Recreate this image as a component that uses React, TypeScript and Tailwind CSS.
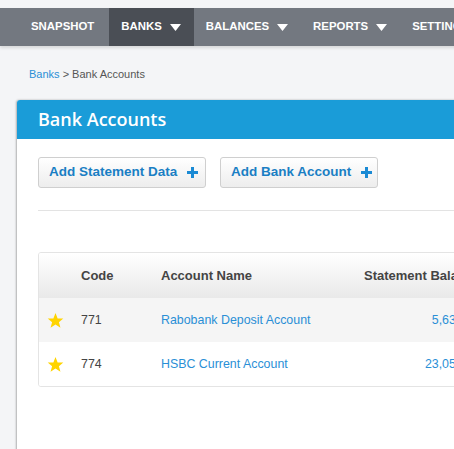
import React from "react";

const Tri = () => (
  <svg width="11" height="7" viewBox="0 0 11 7" className="ml-2">
    <polygon points="0,0 11,0 5.5,7" fill="#ffffff" />
  </svg>
);

const Star = () => (
  <svg width="17" height="17" viewBox="0 0 24 24">
    <polygon
      points="12,1.5 15,9 23,9.3 16.8,14.3 19,22.3 12,17.8 5,22.3 7.2,14.3 1,9.3 9,9"
      fill="#ffd400"
    />
  </svg>
);

const Plus = () => (
  <svg width="11" height="11" viewBox="0 0 11 11" className="ml-[10px]">
    <rect x="4" y="0" width="3" height="11" fill="#1a8ad4" />
    <rect x="0" y="4" width="11" height="3" fill="#1a8ad4" />
  </svg>
);

export default function App() {
  const navItems = [
    { label: "SNAPSHOT", tri: false, active: false },
    { label: "BANKS", tri: true, active: true },
    { label: "BALANCES", tri: true, active: false },
    { label: "REPORTS", tri: true, active: false },
    { label: "SETTINGS", tri: true, active: false },
  ];
  const rows = [
    { code: "771", name: "Rabobank Deposit Account", bal: "5,632.00", bg: "bg-[#f5f5f5]" },
    { code: "774", name: "HSBC Current Account", bal: "23,057.00", bg: "bg-white" },
  ];
  return (
    <div
      className="w-[454px] h-[449px] overflow-hidden bg-[#f4f5f7]"
      style={{ fontFamily: '"Liberation Sans", Arial, sans-serif' }}
    >
      <div className="pt-[8px]">
        <div className="flex h-[38px] bg-[#737880] pl-[19px] shadow-[0_2px_3px_rgba(0,0,0,0.12)] w-[700px]">
          {navItems.map((n) => (
            <div
              key={n.label}
              className={`flex items-center pl-3 text-[11.4px] font-bold text-white ${
                n.active ? "bg-[#4a4e55]" : ""
              } ${n.tri ? "pr-[13px]" : "pr-[15px]"}`}
            >
              <span>{n.label}</span>
              {n.tri && <Tri />}
            </div>
          ))}
        </div>
      </div>

      <div className="pl-[29px] pt-[20px] h-[54px] text-[11px]">
        <span className="text-[#2a8fd6]">Banks</span>
        <span className="text-[#555]"> &gt; Bank Accounts</span>
      </div>

      <div className="ml-[17px] w-[700px] h-[400px] bg-white rounded-tl-[3px] shadow-[-1px_0_2px_rgba(0,0,0,0.25),0_0_3px_rgba(0,0,0,0.08)]">
        <div
          className="h-[39px] bg-[#1a9cd8] rounded-tl-[3px] pl-[21px] flex items-center text-white text-[18px] font-semibold"
          style={{ fontFamily: '"Open Sans", sans-serif' }}
        >
          Bank Accounts
        </div>
        <div className="pl-[21px] pt-[18px]">
          <div className="flex gap-[14px]">
            <button className="h-[31px] w-[168px] flex items-center pl-[10px] border border-[#cfcfcf] rounded-[3px] bg-gradient-to-b from-white to-[#ededed] text-[#1a7fc4] text-[13.5px] font-bold">
              Add Statement Data
              <Plus />
            </button>
            <button className="h-[31px] w-[158px] flex items-center pl-[10px] border border-[#cfcfcf] rounded-[3px] bg-gradient-to-b from-white to-[#ededed] text-[#1a7fc4] text-[13.5px] font-bold">
              Add Bank Account
              <Plus />
            </button>
          </div>
          <div className="mt-[22px] h-px bg-[#e3e3e3]" />

          <div className="mt-[41px] w-[500px] border border-[#e4e4e4] rounded-[3px] overflow-hidden">
            <div className="flex h-[45px] items-center bg-gradient-to-b from-white to-[#e9e9e9] text-[13px] font-bold text-[#444]">
              <div className="w-[42px]" />
              <div className="w-[80px]">Code</div>
              <div className="w-[203px]">Account Name</div>
              <div>Statement Balance</div>
            </div>
            {rows.map((r) => (
              <div key={r.code} className={`flex h-[44px] items-center text-[12.4px] ${r.bg}`}>
                <div className="w-[42px] pl-[8px] flex items-center">
                  <Star />
                </div>
                <div className="w-[80px] text-[#444]">{r.code}</div>
                <div className="w-[203px] text-[#2a8fd6]">{r.name}</div>
                <div className="w-[116px] text-right text-[#2a8fd6]">{r.bal}</div>
              </div>
            ))}
          </div>
        </div>
      </div>
    </div>
  );
}
